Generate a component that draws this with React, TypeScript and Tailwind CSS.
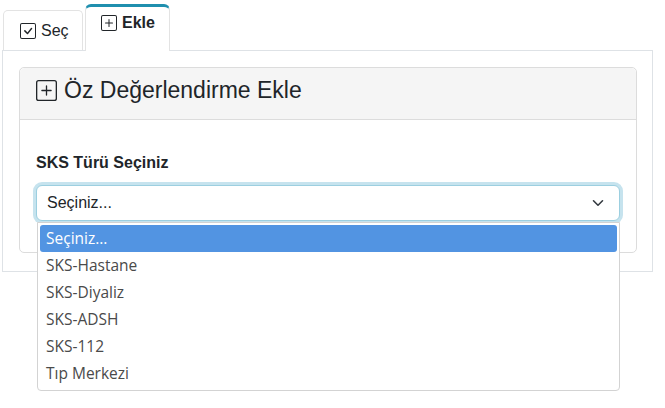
import React from "react";

const options = ["Seçiniz...", "SKS-Hastane", "SKS-Diyaliz", "SKS-ADSH", "SKS-112", "Tıp Merkezi"];

function PlusSquare({ className }: { className?: string }) {
  return (
    <svg viewBox="0 0 16 16" fill="currentColor" className={className}>
      <path d="M14 1a1 1 0 0 1 1 1v12a1 1 0 0 1-1 1H2a1 1 0 0 1-1-1V2a1 1 0 0 1 1-1h12zM2 0a2 2 0 0 0-2 2v12a2 2 0 0 0 2 2h12a2 2 0 0 0 2-2V2a2 2 0 0 0-2-2H2z" />
      <path d="M8 4a.5.5 0 0 1 .5.5v3h3a.5.5 0 0 1 0 1h-3v3a.5.5 0 0 1-1 0v-3h-3a.5.5 0 0 1 0-1h3v-3A.5.5 0 0 1 8 4z" />
    </svg>
  );
}

function CheckSquare({ className }: { className?: string }) {
  return (
    <svg viewBox="0 0 16 16" fill="currentColor" className={className}>
      <path d="M14 1a1 1 0 0 1 1 1v12a1 1 0 0 1-1 1H2a1 1 0 0 1-1-1V2a1 1 0 0 1 1-1h12zM2 0a2 2 0 0 0-2 2v12a2 2 0 0 0 2 2h12a2 2 0 0 0 2-2V2a2 2 0 0 0-2-2H2z" />
      <path d="M10.97 4.97a.75.75 0 0 1 1.071 1.05l-3.992 4.99a.75.75 0 0 1-1.08.02L4.324 8.384a.75.75 0 1 1 1.06-1.06l2.094 2.093 3.473-4.425a.235.235 0 0 1 .02-.022z" />
    </svg>
  );
}

export default function App() {
  return (
    <div className="relative h-[408px] w-[665px] overflow-hidden bg-white font-['Liberation_Sans',Arial,sans-serif] text-[#212529]">
      {/* Tabs */}
      <div className="ml-[2px] flex h-[51px] w-[651px] items-end border-b border-[#dee2e6] pl-px">
        <div className="flex h-[40px] w-[80px] items-center gap-[5px] rounded-t-[5px] border border-b-0 border-[#e3e3e3] pl-[16px] text-[16px]">
          <CheckSquare className="h-[16px] w-[16px]" />
          <span>Seç</span>
        </div>
        <div className="-mb-px ml-[2px] flex h-[47px] w-[85px] items-start gap-[5px] rounded-t-[6px] border-x border-t-[3px] border-[#e3e3e3] border-t-[#1f8fae] bg-white pl-[15px] pt-[7px] text-[16px] font-bold">
          <PlusSquare className="mt-[1px] h-[16px] w-[16px]" />
          <span className="leading-[18px]">Ekle</span>
        </div>
      </div>

      {/* Tab content */}
      <div className="ml-[2px] h-[221px] w-[651px] border border-t-0 border-[#dee2e6] px-[16px] pt-[16px]">
        <div className="w-[618px] rounded-[5px] border border-[#dcdcdc]">
          <div className="flex h-[52px] items-center gap-[7px] rounded-t-[5px] border-b border-[#dcdcdc] bg-[#f5f5f5] pb-[7px] pl-[16px] text-[23px]">
            <PlusSquare className="h-[21px] w-[21px]" />
            <span>Öz Değerlendirme Ekle</span>
          </div>
          <div className="px-[16px] pb-[31px] pt-[34px]">
            <div className="text-[16px] font-bold leading-[18px]">SKS Türü Seçiniz</div>
            <div className="mt-[13px] flex h-[36px] items-center justify-between rounded-[6px] border border-[#9ccfe0] bg-white pl-[10px] pr-[15px] text-[16px] ring-[3px] ring-[#c6e3ee]">
              <span>Seçiniz...</span>
              <svg viewBox="0 0 12 8" className="h-[8px] w-[12px]" fill="none" stroke="#343a40" strokeWidth="1.6" strokeLinecap="round" strokeLinejoin="round">
                <path d="M1.5 1.8 6 6.2l4.5-4.4" />
              </svg>
            </div>
          </div>
        </div>
      </div>

      {/* Native dropdown list */}
      <div className="absolute left-[37px] top-[222px] w-[583px] rounded-b-[4px] border border-[#d3d3d3] bg-white px-[2px] pb-[3px] pt-[2px] font-['Open_Sans','Noto_Sans',sans-serif] text-[15.5px] text-[#4a4a4a]">
        {options.map((o, i) => (
          <div
            key={o}
            className={`flex h-[27px] items-center rounded-[3px] pl-[6px] ${i === 0 ? "bg-[#5294e2] text-white" : ""}`}
          >
            {o}
          </div>
        ))}
      </div>
    </div>
  );
}
